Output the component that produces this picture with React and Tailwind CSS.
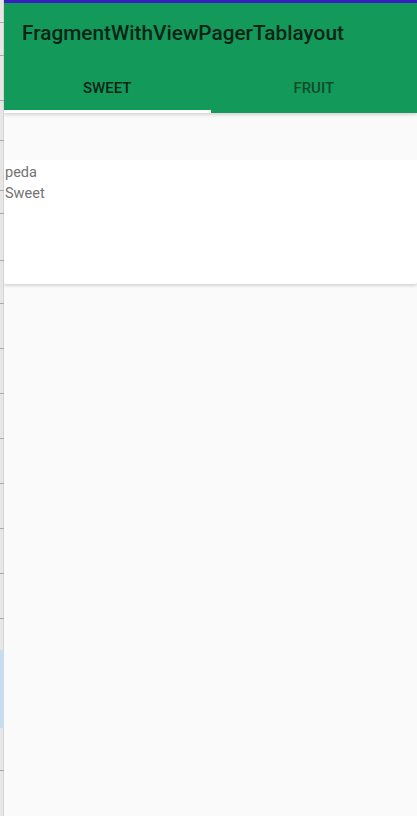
const lines = [22, 55, 100, 140, 190, 213, 260, 303, 348, 393, 438, 483, 528, 573, 618, 770];

function SideStrip() {
  return (
    <div className="relative w-[4px] shrink-0 bg-[#e6e6e6] border-r border-[#d4d4d4]">
      {lines.map((y) => (
        <div key={y} className="absolute left-0 w-[4px] h-px bg-[#a8a8a8]" style={{ top: y }} />
      ))}
      <div className="absolute left-0 top-[650px] h-[78px] w-[4px] bg-[#c7dcef]" />
    </div>
  );
}

export default function App() {
  return (
    <div className="flex w-[417px] h-[816px] overflow-hidden bg-[#fafafa] font-['Roboto',sans-serif]">
      <SideStrip />
      <div className="flex-1 flex flex-col">
        <div className="h-[3px] bg-[#3a1fc0]" />
        <div className="bg-[#139a5a] shadow-[0_2px_3px_rgba(0,0,0,0.15)]">
          <div className="h-[61px] flex items-center pl-[18px]">
            <h1 className="text-[20.8px] font-medium text-[#0b2416]">FragmentWithViewPagerTablayout</h1>
          </div>
          <div className="flex h-[49px]">
            <div className="flex-1 flex flex-col">
              <div className="flex-1 flex items-center justify-center pt-[3px] text-[15px] font-medium text-[#0b2416]">SWEET</div>
              <div className="h-[3px] bg-white" />
            </div>
            <div className="flex-1 flex items-center justify-center pt-[3px] pb-[3px] text-[15px] font-medium text-[#0f4a2b]">FRUIT</div>
          </div>
        </div>
        <div className="pt-[47px]">
          <div className="bg-white h-[124px] rounded-b-[2px] shadow-[0_2px_3px_rgba(0,0,0,0.14)] pt-[2px] text-[14.5px] leading-[21px] text-[#737373]">
            <p className="pl-[1px]">peda</p>
            <p className="pl-[1px]">Sweet</p>
          </div>
        </div>
      </div>
    </div>
  );
}
